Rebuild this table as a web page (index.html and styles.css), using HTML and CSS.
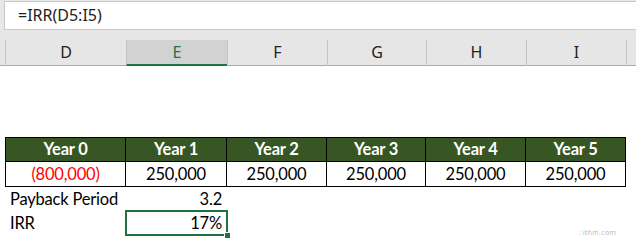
FILE: index.html
```html
<!DOCTYPE html>
<html>
<head>
<meta charset="utf-8">
<link rel="stylesheet" href="styles.css">
</head>
<body>
<div class="app">
  <div class="fbar">
    <div class="fbox">=IRR(D5:I5)</div>
  </div>
  <div class="colhead">
    <div class="lead"></div>
    <div class="ch">D</div>
    <div class="ch sel">E</div>
    <div class="ch">F</div>
    <div class="ch">G</div>
    <div class="ch">H</div>
    <div class="ch">I</div>
    <div class="ch tail"></div>
  </div>
  <div class="sheet">
    <div class="blank"></div>
    <div class="row hdr">
      <div class="c first">Year 0</div>
      <div class="c">Year 1</div>
      <div class="c">Year 2</div>
      <div class="c">Year 3</div>
      <div class="c">Year 4</div>
      <div class="c">Year 5</div>
    </div>
    <div class="row data">
      <div class="c first neg">(800,000)</div>
      <div class="c">250,000</div>
      <div class="c">250,000</div>
      <div class="c">250,000</div>
      <div class="c">250,000</div>
      <div class="c">250,000</div>
    </div>
    <div class="row plain">
      <div class="c label">Payback Period</div>
      <div class="c num">3.2</div>
    </div>
    <div class="row plain">
      <div class="c label">IRR</div>
      <div class="c num active">17%<span class="handle"></span></div>
    </div>
    <div class="mark">::ithm.com</div>
  </div>
</div>
</body>
</html>
```
FILE: styles.css
```css
html, body {
  margin: 0;
  padding: 0;
  background: #ffffff;
}
.app {
  width: 636px;
  height: 240px;
  overflow: hidden;
  position: relative;
  font-family: "Lato", "Liberation Sans", sans-serif;
}
.fbar {
  height: 30px;
  background: #e8e8e8;
  padding: 1px 0 0 4px;
  box-sizing: border-box;
}
.fbox {
  height: 29px;
  box-sizing: border-box;
  background: #ffffff;
  border-top: 1px solid #c8c8c8;
  border-left: 1px solid #c8c8c8;
  border-bottom: 1px solid #c8c8c8;
  padding-left: 13px;
  font-family: "Noto Sans", "Open Sans", sans-serif;
  font-size: 16px;
  line-height: 27px;
  color: #222;
}
.colhead {
  height: 36px;
  background: #e6e6e6;
  display: grid;
  grid-template-columns: 5px 121px 101px 100px 99px 100px 100px 10px;
  padding-top: 10px;
  box-sizing: border-box;
  border-bottom: 1px solid #ababab;
}
.ch {
  border-left: 1px solid #c4c4c4;
  font-family: "Noto Sans", "Open Sans", sans-serif;
  font-size: 16px;
  color: #222;
  text-align: center;
  line-height: 25px;
}
.ch.sel {
  background: #d2d2d2;
  color: #217346;
  border-bottom: 2px solid #217346;
  line-height: 24px;
}
.sheet {
  position: relative;
  padding-left: 5px;
}
.blank {
  height: 71px;
}
.row {
  display: grid;
  grid-template-columns: 121px 101px 100px 99px 100px 100px;
}
.row .c {
  font-size: 16.5px;
  letter-spacing: -0.2px;
  text-align: center;
  box-sizing: border-box;
  color: #000;
}
.hdr .c, .data .c {
  border-right: 1px solid #000;
  border-bottom: 1px solid #000;
}
.hdr .c.first, .data .c.first {
  border-left: 1px solid #000;
}
.hdr .c {
  border-top: 1px solid #000;
  background: #375623;
  color: #ffffff;
  font-weight: 700;
  height: 25px;
  line-height: 23px;
}
.data .c {
  height: 25px;
  line-height: 24px;
}
.neg {
  color: #ff0000 !important;
}
.plain .c {
  height: 24px;
  line-height: 24px;
}
.c.label {
  text-align: left;
  padding-left: 5px;
}
.c.num {
  text-align: right;
  padding-right: 5px;
}
.c.active {
  position: relative;
  outline: 2px solid #217346;
  outline-offset: -1px;
}
.handle {
  position: absolute;
  right: -4px;
  bottom: -4px;
  width: 5px;
  height: 5px;
  background: #217346;
  border: 1px solid #fff;
}
.mark {
  position: absolute;
  right: 20px;
  bottom: -2px;
  font-size: 7px;
  color: #c0c0c0;
  font-family: "DejaVu Sans", sans-serif;
}
```
